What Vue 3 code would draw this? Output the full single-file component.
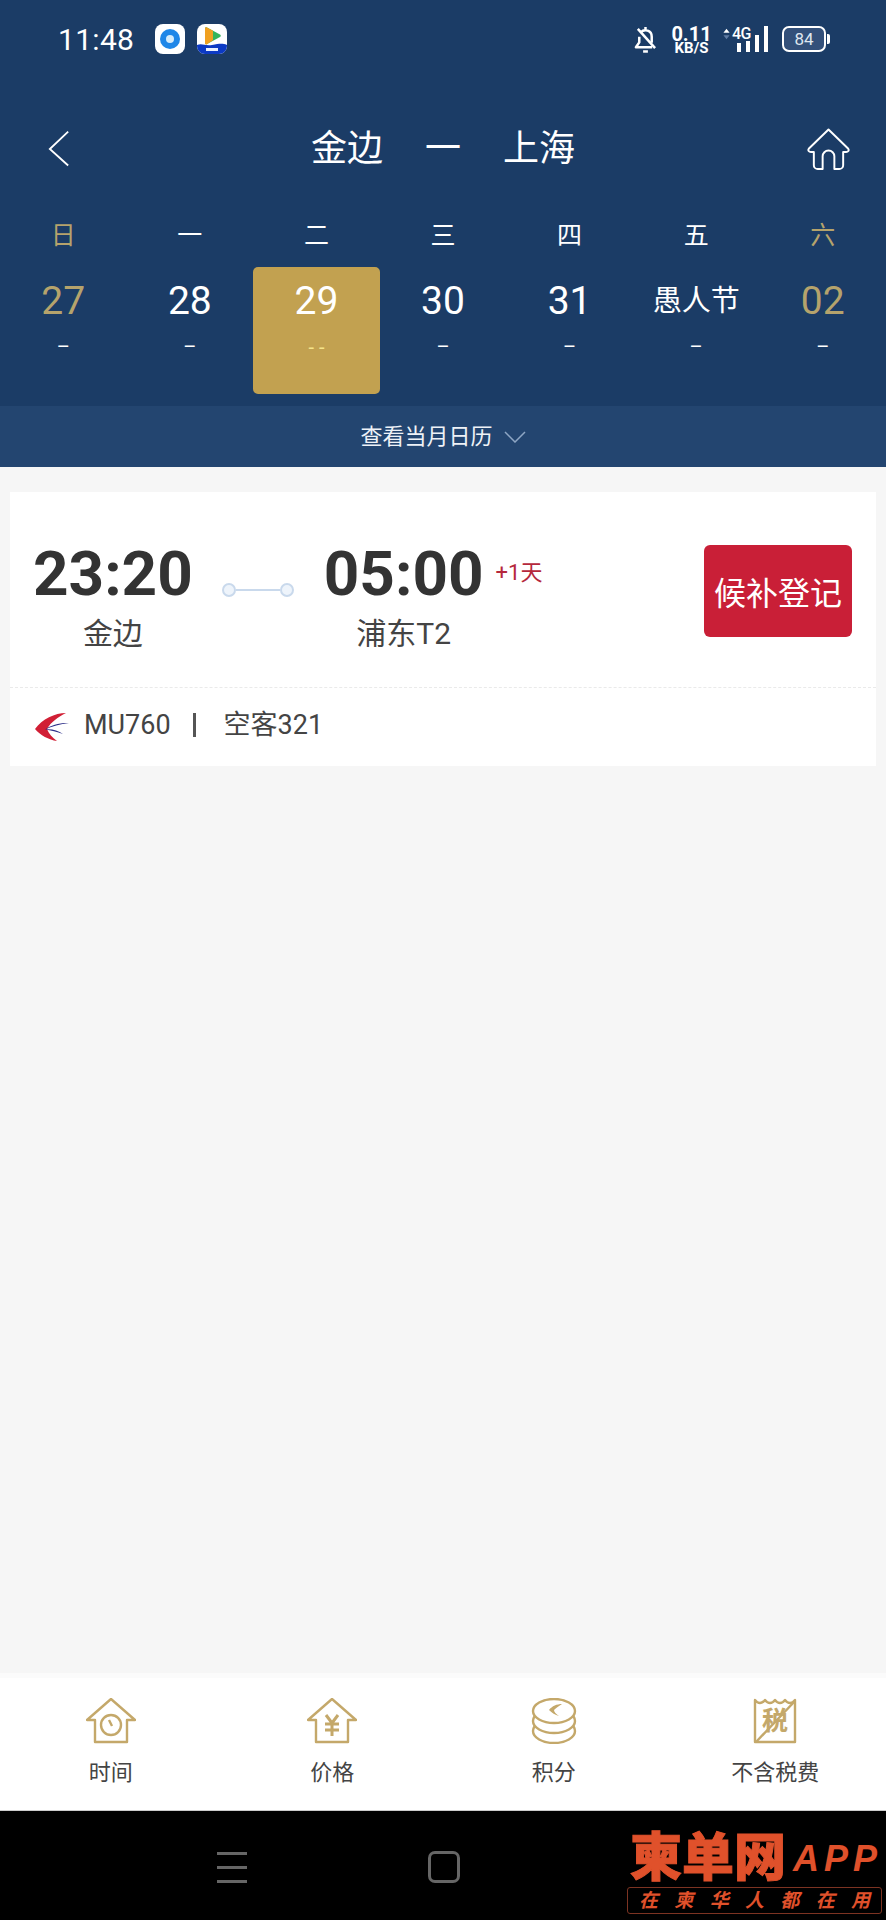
<template>
  <div class="page">
    <header class="head">
      <!-- status bar -->
      <div class="status">
        <span class="clock">11:48</span>
        <svg class="app-icon" viewBox="0 0 30 30">
          <rect width="30" height="30" rx="8" fill="#fff" />
          <circle cx="15" cy="15" r="10" fill="#1f87e8" />
          <circle cx="15" cy="15" r="4" fill="#d5ecfb" />
        </svg>
        <svg class="app-icon second" viewBox="0 0 30 30">
          <rect width="30" height="30" rx="8" fill="#fff" />
          <path d="M0 21c5-2 8 1 15 0s10-2 15 0v1a8 8 0 0 1-8 8H8a8 8 0 0 1-8-8z" fill="#0c3ac4" />
          <path d="M8 4.500c0-1 1-1.500 2-1l13 7c1 .6 1 2 0 2.600l-13 7c-1 .5-2 0-2-1z" fill="#35b45a" />
          <path d="M8 4.500c0-1 1-1.500 2-1l6 3.200v9.600l-6 4c-1 .5-2 0-2-1z" fill="#f0a020" />
          <rect x="9" y="24" width="12" height="3" fill="#e8f0ff" />
        </svg>
        <span class="status-right">
          <svg class="bell" viewBox="0 0 24 28" fill="none" stroke="#fff" stroke-width="2.600" stroke-linejoin="round">
            <path d="M12 1v3M7 6.500C11 2.500 18.500 4.500 18.500 11v6.500" />
            <path d="M5.500 11v6L2 22h17" />
            <path d="M4 3l18 20" />
            <path d="M9.500 26.500h5" />
          </svg>
          <span class="speed"><b>0.11</b><b class="unit">KB/S</b></span>
          <span class="net">
            <svg class="updown" viewBox="0 0 8 12">
              <path d="M4 0l3.500 4.500h-7z" fill="#fff" />
              <path d="M4 12L.5 7.500h7z" fill="#5f7ba3" />
            </svg>
            <span class="net-label">4G</span>
            <svg class="signal" viewBox="0 0 31 26" fill="#fff">
              <rect x="0" y="17" width="4" height="9" />
              <rect x="9" y="15" width="4" height="11" />
              <rect x="18" y="9" width="4" height="17" />
              <rect x="27" y="0" width="4" height="26" />
            </svg>
          </span>
          <span class="battery">
            <span class="battery-box">84</span>
            <span class="battery-cap"></span>
          </span>
        </span>
      </div>

      <!-- title -->
      <div class="nav">
        <svg class="back" viewBox="0 0 24 40" fill="none" stroke="#fff" stroke-width="2">
          <path d="M22 1L2 20l20 18" />
        </svg>
        <div class="route">
          <span>金边</span>
          <span>一</span>
          <span>上海</span>
        </div>
        <svg class="home" viewBox="0 0 44 44" fill="none" stroke="#fff" stroke-width="2">
          <path d="M22 1.500L2 21c-1.500 2 0 3.500 2 3.500h3V38a4 4 0 0 0 4 4h5V29a6 6 0 0 1 12 0v13h5a4 4 0 0 0 4-4V24.500h3c2 0 3.500-1.500 2-3.500z" stroke-linejoin="round" />
        </svg>
      </div>

      <!-- week -->
      <div class="week">
        <span v-for="(w, i) in weeks" :key="w" :class="{ gold: i === 0 || i === 6 }">{{ w }}</span>
      </div>
      <div class="days">
        <div v-for="d in days" :key="d.label" class="day" :class="{ active: d.active, gold: d.gold }">
          <span class="num" :class="{ holiday: d.holiday }">{{ d.label }}</span>
          <span class="price">{{ d.active ? '- -' : '–' }}</span>
        </div>
      </div>
    </header>

    <div class="month">
      <span>查看当月日历</span>
      <svg class="chev" viewBox="0 0 22 12" fill="none" stroke="#8ea6c4" stroke-width="1.500">
        <path d="M1 1l10 10L21 1" />
      </svg>
    </div>

    <main class="content">
      <section class="card">
        <div class="flight">
          <div class="point">
            <strong>23:20</strong>
            <span>金边</span>
          </div>
          <div class="line">
            <i></i><em></em><i></i>
          </div>
          <div class="point">
            <strong>05:00</strong>
            <span>浦东T2</span>
          </div>
          <span class="plus">+1天</span>
          <button class="wait">候补登记</button>
        </div>
        <div class="info">
          <svg class="airline" viewBox="0 0 34 28">
            <path d="M31 0C20 0 7 6 0 16c5 6 14 11 22 12-5-4-8-7-10-12C16 9 23 4 31 0z" fill="#d11f35" />
            <path d="M34 10C25 9.500 16 12 10 16.500c7-3 15-5.500 24-6.500z" fill="#2a2c86" />
            <path d="M28 21c-5-3.500-12-5.500-18-4.500 6 .5 12 2.500 18 4.500z" fill="#2a2c86" />
          </svg>
          <span class="flight-no">MU760</span>
          <span class="sep"></span>
          <span>空客321</span>
        </div>
      </section>
    </main>

    <nav class="tabs">
      <div class="tab">
        <svg viewBox="0 0 50 46" fill="none" stroke="#c4a86a" stroke-width="2.400" stroke-linejoin="round">
          <path d="M25 1L1 22h8v22h32V22h8z" />
          <circle cx="25" cy="27" r="10" />
          <path d="M23 22l3 6" />
        </svg>
        <span>时间</span>
      </div>
      <div class="tab">
        <svg viewBox="0 0 50 46" fill="none" stroke="#c4a86a" stroke-width="2.400" stroke-linejoin="round">
          <path d="M25 1L1 22h8v22h32V22h8z" />
          <path d="M19 17l6 8 6-8M25 25v13M18 26h14M18 32h14" stroke-width="3" />
        </svg>
        <span>价格</span>
      </div>
      <div class="tab">
        <svg viewBox="0 0 50 46" fill="none" stroke="#c4a86a" stroke-width="2.400">
          <ellipse cx="25" cy="33" rx="21" ry="12" fill="#fff" />
          <ellipse cx="25" cy="23" rx="21" ry="12" fill="#fff" />
          <ellipse cx="25" cy="13" rx="21" ry="12" fill="#fff" />
          <path d="M33 6c-5 0-10 2-13 6 3 3 6 5 10 6-3-2-5-4-5-6 2-2 5-4 8-6z" fill="#c4a86a" stroke="none" />
        </svg>
        <span>积分</span>
      </div>
      <div class="tab">
        <svg viewBox="0 0 44 46" fill="none" stroke="#c4a86a" stroke-width="2.400">
          <path d="M2 2c3 4 7 4 10 0 3 4 7 4 10 0 3 4 7 4 10 0 3 4 7 4 10 0v42H2z" stroke-linejoin="round" />
          <path d="M42 3L3 44" />
          <text x="22" y="32" text-anchor="middle" class="tax" stroke="none" fill="#c4a86a">税</text>
        </svg>
        <span>不含税费</span>
      </div>
    </nav>

    <footer class="system">
      <div class="sys-menu"><i></i><i></i><i></i></div>
      <div class="sys-home"></div>
      <div class="mark">
        <div class="mark-top">
          <span class="mark-name">柬单网</span>
          <span class="mark-app">APP</span>
        </div>
        <div class="mark-slogan">
          <span v-for="(c, i) in slogan" :key="i">{{ c }}</span>
        </div>
      </div>
    </footer>
  </div>
</template>

<script setup>
const weeks = ['日', '一', '二', '三', '四', '五', '六']

const days = [
  { label: '27', gold: true },
  { label: '28' },
  { label: '29', active: true },
  { label: '30' },
  { label: '31' },
  { label: '愚人节', holiday: true },
  { label: '02', gold: true }
]

const slogan = '在柬华人都在用'.split('')
</script>

<style>
html,
body {
  margin: 0;
  background: #f6f6f6;
}
</style>

<style scoped>
.page {
  width: 886px;
  height: 1920px;
  display: flex;
  flex-direction: column;
  font-family: Roboto, "Noto Sans CJK SC", sans-serif;
  background: #f6f6f6;
  overflow: hidden;
}

.head {
  height: 406px;
  background: #1b3c66;
  color: #fff;
  box-sizing: border-box;
}

.status {
  height: 78px;
  display: flex;
  align-items: center;
  padding-left: 58px;
  padding-right: 56px;
}

.clock {
  font-size: 30px;
  letter-spacing: 0.3px;
  width: 97px;
}

.app-icon {
  width: 30px;
  height: 30px;
}

.app-icon.second {
  margin-left: 12px;
}

.status-right {
  margin-left: auto;
  display: flex;
  align-items: center;
}

.bell {
  width: 23px;
  height: 27px;
}

.speed {
  display: flex;
  flex-direction: column;
  align-items: center;
  margin-left: 17px;
  width: 35px;
}

.speed b {
  font-size: 20px;
  font-weight: 700;
  line-height: 20px;
  height: 17px;
}

.speed .unit {
  font-size: 15px;
  line-height: 15px;
  height: 14px;
}

.net {
  position: relative;
  display: flex;
  align-items: flex-end;
  margin-left: 14px;
  width: 45px;
  height: 26px;
}

.updown {
  width: 7px;
  height: 12px;
  position: absolute;
  left: 0;
  top: 2px;
}

.net-label {
  position: absolute;
  left: 9px;
  top: -1px;
  font-size: 16px;
  line-height: 18px;
  font-weight: 500;
  letter-spacing: -0.5px;
}

.signal {
  position: absolute;
  right: 0;
  bottom: 0;
  width: 31px;
  height: 26px;
}

.battery {
  display: flex;
  align-items: center;
  margin-left: 14px;
}

.battery-box {
  width: 40px;
  height: 22px;
  border: 2px solid #fff;
  border-radius: 7px;
  font-size: 17px;
  line-height: 22px;
  text-align: center;
  color: #dfe6ef;
  background: #33507a;
}

.battery-cap {
  width: 3px;
  height: 10px;
  background: #fff;
  border-radius: 0 2px 2px 0;
  margin-left: 1px;
}

.nav {
  height: 140px;
  display: grid;
  grid-template-columns: 1fr auto 1fr;
  align-items: center;
  padding: 2px 36px 0 36px;
  box-sizing: border-box;
}

.back {
  width: 22px;
  height: 38px;
  margin-left: 12px;
}

.route {
  display: flex;
  gap: 42px;
  font-size: 36px;
  line-height: 44px;
}

.home {
  width: 43px;
  height: 43px;
  justify-self: end;
}

.week {
  height: 36px;
  display: grid;
  grid-template-columns: repeat(7, 1fr);
  font-size: 25px;
  line-height: 36px;
  text-align: center;
}

.gold {
  color: #b5a36c;
}

.days {
  margin-top: 13px;
  display: grid;
  grid-template-columns: repeat(7, 1fr);
}

.day {
  height: 127px;
  display: flex;
  flex-direction: column;
  align-items: center;
  border-radius: 5px;
}

.day.active {
  background: #c2a150;
}

.num {
  font-size: 39px;
  line-height: 46px;
  height: 46px;
  margin-top: 11px;
}

.num.holiday {
  font-size: 29px;
}

.price {
  margin-top: 11px;
  font-size: 20px;
  line-height: 24px;
  color: #fff;
}

.active .price {
  color: #f5e38a;
}

.month {
  height: 61px;
  background: #234570;
  color: #eef2f7;
  display: flex;
  align-items: center;
  justify-content: center;
  gap: 11px;
  font-size: 22px;
  line-height: 30px;
}

.chev {
  width: 22px;
  height: 12px;
}

.content {
  flex: 1;
  padding: 25px 10px 0;
}

.card {
  background: #fff;
}

.flight {
  height: 196px;
  box-sizing: border-box;
  border-bottom: 1px dashed #eaeaea;
  padding: 0 24px 0 23px;
  display: flex;
  align-items: flex-start;
}

.point {
  display: flex;
  flex-direction: column;
  align-items: center;
  color: #333;
}

.point strong {
  margin-top: 44px;
  font-size: 62px;
  line-height: 76px;
  font-weight: 700;
}

.point span {
  margin-top: 2px;
  font-size: 30px;
  line-height: 40px;
  color: #444;
}

.line {
  display: flex;
  align-items: center;
  margin: 91px 30px 0 29px;
}

.line i {
  width: 10px;
  height: 10px;
  border: 2px solid #c9d9ec;
  border-radius: 50%;
  background: #eef4fb;
}

.line em {
  width: 44px;
  height: 2px;
  background: #c9d9ec;
}

.plus {
  margin: 66px 0 0 12px;
  font-size: 22px;
  line-height: 30px;
  color: #b5283c;
}

.wait {
  margin: 53px 0 0 auto;
  width: 148px;
  height: 92px;
  border: 0;
  border-radius: 6px;
  background: #c91f37;
  color: #fff;
  font-family: inherit;
  font-size: 32px;
  padding: 0;
}

.info {
  height: 78px;
  padding: 0 0 5px 25px;
  box-sizing: border-box;
  display: flex;
  align-items: center;
  font-size: 27px;
  line-height: 36px;
  color: #444;
}

.airline {
  width: 34px;
  height: 28px;
  margin-top: 5px;
}

.flight-no {
  margin-left: 15px;
}

.sep {
  width: 3px;
  height: 24px;
  background: #555;
  margin: 0 28px 0 22px;
}

.tabs {
  height: 138px;
  background: #fff;
  border-top: 5px solid #fbfbfb;
  border-bottom: 1px solid #ccc;
  display: grid;
  grid-template-columns: repeat(4, 1fr);
  flex-shrink: 0;
  box-sizing: border-box;
}

.tab {
  display: flex;
  flex-direction: column;
  align-items: center;
  color: #444;
  font-size: 22px;
}

.tab svg {
  width: 50px;
  height: 46px;
  margin-top: 20px;
}

.tab span {
  margin-top: 12px;
  line-height: 34px;
}

.tax {
  font-size: 26px;
  font-weight: 700;
  font-family: "Noto Sans CJK SC", sans-serif;
}

.system {
  position: relative;
  height: 109px;
  background: #000;
  flex-shrink: 0;
}

.sys-menu {
  position: absolute;
  left: 217px;
  top: 41px;
  width: 30px;
  display: flex;
  flex-direction: column;
  gap: 11px;
}

.sys-menu i {
  display: block;
  height: 3px;
  background: #666;
}

.sys-home {
  position: absolute;
  left: 428px;
  top: 40px;
  width: 26px;
  height: 26px;
  border: 3px solid #666;
  border-radius: 7px;
}

.mark {
  position: absolute;
  left: 627px;
  top: 20px;
  width: 255px;
  color: #e0512b;
}

.mark-top {
  display: flex;
  align-items: center;
  height: 56px;
  padding-left: 3px;
  white-space: nowrap;
}

.mark-name {
  font-size: 52px;
  line-height: 56px;
  font-weight: 900;
  flex-shrink: 0;
  -webkit-text-stroke: 1px #e0512b;
}

.mark-app {
  margin-left: 7px;
  font-family: "Liberation Sans", sans-serif;
  font-size: 36px;
  font-weight: 700;
  font-style: italic;
  letter-spacing: 5px;
}

.mark-slogan {
  height: 27px;
  border: 1px solid #7c3322;
  border-radius: 3px;
  display: flex;
  justify-content: space-between;
  align-items: center;
  padding: 0 11px;
  font-size: 19px;
  line-height: 25px;
  font-style: italic;
  font-weight: 700;
  box-sizing: border-box;
}
</style>
